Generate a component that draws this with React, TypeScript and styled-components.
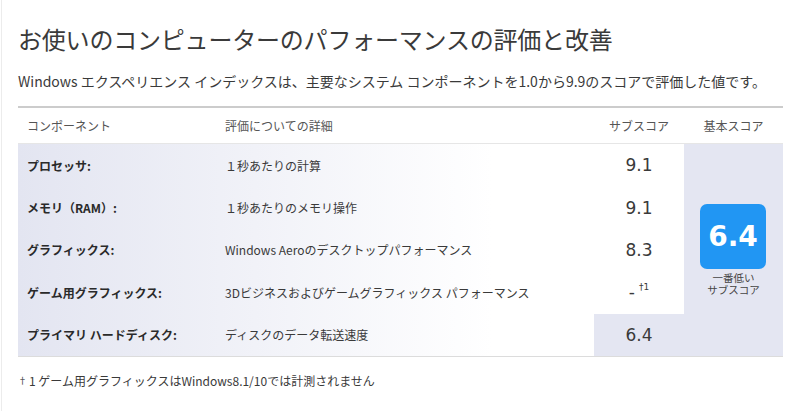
import React from "react";
import styled, { createGlobalStyle } from "styled-components";

const Global = createGlobalStyle`
  html, body { margin: 0; padding: 0; background: #fff; }
  body {
    font-family: "Noto Sans CJK JP", "Noto Sans", sans-serif;
    color: #333;
  }
`;

const Page = styled.div`
  margin-left: 1px;
  border-left: 1px solid #ececec;
  padding: 22px 16px 0 16px;
  height: 411px;
  box-sizing: border-box;
  width: 784px;
`;

const Title = styled.h1`
  margin: 0;
  font-size: 24px;
  line-height: 34px;
  font-weight: 400;
  color: #3a3a3a;
  letter-spacing: -0.2px;
`;

const Lead = styled.p`
  margin: 15px 0 0 0;
  font-size: 14px;
  line-height: 20px;
  color: #3a3a3a;
`;

const Table = styled.div`
  margin-top: 15px;
  width: 765px;
`;

const cols = "198px 378px 90px 99px";

const HeaderRow = styled.div`
  display: grid;
  grid-template-columns: ${cols};
  height: 35px;
  align-items: center;
  border-top: 2px solid #cccccc;
  border-bottom: 1px solid #e6e6e6;
  font-size: 12px;
  color: #555;
`;

const HeadCell = styled.div<{ $center?: boolean }>`
  padding-left: ${(p) => (p.$center ? "0" : "9px")};
  text-align: ${(p) => (p.$center ? "center" : "left")};
`;

const Body = styled.div`
  display: grid;
  grid-template-columns: ${cols};
  grid-template-rows: repeat(5, 42.4px);
  background: linear-gradient(90deg, #e3e5f1 0%, #ffffff 62%);
  border-bottom: 1px solid #dcdcdc;
`;

const Label = styled.div`
  display: flex;
  align-items: center;
  padding-left: 9px;
  font-size: 12px;
  font-weight: 700;
  color: #2a2a2a;
`;

const Detail = styled.div`
  display: flex;
  align-items: center;
  padding-left: 9px;
  font-size: 12px;
  color: #3a3a3a;
`;

const SubScore = styled.div<{ $low?: boolean }>`
  display: flex;
  align-items: center;
  justify-content: center;
  font-family: "DejaVu Sans", "Noto Sans", sans-serif;
  font-size: 17px;
  color: #3a3a3a;
  background: ${(p) => (p.$low ? "#e4e6f2" : "#ffffff")};
`;

const Sup = styled.span`
  font-size: 9px;
  margin-left: 4px;
  position: relative;
  top: -5px;
`;

const BaseCell = styled.div`
  grid-column: 4;
  grid-row: 1 / span 5;
  background: #e4e6f2;
  display: flex;
  flex-direction: column;
  align-items: center;
  justify-content: center;
`;

const Badge = styled.div`
  width: 66px;
  height: 65px;
  border-radius: 7px;
  background: #2196f3;
  color: #fff;
  display: flex;
  align-items: center;
  justify-content: center;
  font-family: "DejaVu Sans", sans-serif;
  font-weight: 700;
  font-size: 28px;
  margin-left: -1px;
`;

const BadgeNote = styled.div`
  margin-top: 3px;
  font-size: 10.5px;
  line-height: 12px;
  color: #444;
  text-align: center;
`;

const Footnote = styled.p`
  margin: 15px 0 0 0;
  font-size: 12px;
  line-height: 18px;
  color: #3a3a3a;
`;

const Dagger = styled.span`
  font-size: 9px;
  position: relative;
  top: -2px;
  margin-right: 2px;
`;

type Row = { label: string; detail: string; score: React.ReactNode; low?: boolean };

const rows: Row[] = [
  { label: "プロセッサ:", detail: "１秒あたりの計算", score: "9.1" },
  { label: "メモリ（RAM）:", detail: "１秒あたりのメモリ操作", score: "9.1" },
  { label: "グラフィックス:", detail: "Windows Aeroのデスクトップパフォーマンス", score: "8.3" },
  {
    label: "ゲーム用グラフィックス:",
    detail: "3Dビジネスおよびゲームグラフィックス パフォーマンス",
    score: (
      <>
        -<Sup>†1</Sup>
      </>
    ),
  },
  { label: "プライマリ ハードディスク:", detail: "ディスクのデータ転送速度", score: "6.4", low: true },
];

export default function App() {
  return (
    <Page>
      <Global />
      <Title>お使いのコンピューターのパフォーマンスの評価と改善</Title>
      <Lead>
        Windows エクスペリエンス インデックスは、主要なシステム コンポーネントを1.0から9.9のスコアで評価した値です。
      </Lead>
      <Table>
        <HeaderRow>
          <HeadCell>コンポーネント</HeadCell>
          <HeadCell>評価についての詳細</HeadCell>
          <HeadCell $center>サブスコア</HeadCell>
          <HeadCell $center>基本スコア</HeadCell>
        </HeaderRow>
        <Body>
          <BaseCell>
            <Badge>6.4</Badge>
            <BadgeNote>
              一番低い
              <br />
              サブスコア
            </BadgeNote>
          </BaseCell>
          {rows.map((r) => (
            <React.Fragment key={r.label}>
              <Label>{r.label}</Label>
              <Detail>{r.detail}</Detail>
              <SubScore $low={r.low}>{r.score}</SubScore>
            </React.Fragment>
          ))}
        </Body>
      </Table>
      <Footnote>
        <Dagger>†</Dagger>1 ゲーム用グラフィックスはWindows8.1/10では計測されません
      </Footnote>
    </Page>
  );
}
